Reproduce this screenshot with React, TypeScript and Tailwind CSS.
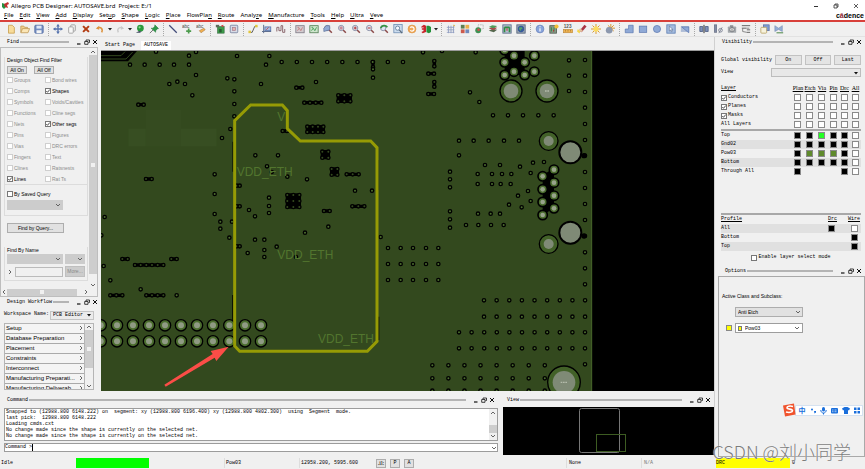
import React, { useState } from "react";

const SANS = "font-['Liberation_Sans',sans-serif]";
const MONO = "font-['Liberation_Mono',monospace]";
const SERIF = "font-['Liberation_Serif',serif]";

const MENUS = ["File", "Edit", "View", "Add", "Display", "Setup", "Shape", "Logic", "Place", "FlowPlan", "Route", "Analyze", "Manufacture", "Tools", "Help", "Ultra", "Veve"];
const ACCESS_KEY: Record<string, number> = { Setup: 3, FlowPlan: 7, Analyze: 5 };

const BLUE = "#8fa9d6";
const NAVY = "#5673ad";

const lens = (
  <>
    <path d="M7 7l3.6 3.6" stroke="#8c4a4a" strokeWidth="1.8" />
    <circle cx="5" cy="4.8" r="3.2" fill="#dfe6f2" stroke="#8b8fa6" strokeWidth="1.1" />
  </>
);

// Toolbar glyphs, all drawn on a 12 x 12 grid
const ICONS: Record<string, React.ReactNode> = {
  "New": <path d="M3 1.5h4.5L10 4v7H3z" fill="#f8dc9a" stroke="#c9a050" />,
  "Open": <><path d="M1 10V2.500h3.500l1 1.500H9v2" fill="#f2d08c" stroke="#c19a58" /><path d="M1 10.500L3 5.500h8.500L9.500 10.500z" fill="#fbe6b6" stroke="#c19a58" /></>,
  "Save": <><rect x="1" y="1.500" width="10" height="9.500" rx="1" fill="#7690c4" stroke="#4d67a0" /><rect x="3" y="2" width="6" height="3.500" fill="#dfe8f8" /><rect x="3" y="7.500" width="6" height="3.500" fill="#f4f4f4" /></>,
  "Move": <><path d="M6 1v10M1 6h10" stroke={NAVY} strokeWidth="1.6" /><path d="M6 0l2.200 3H3.800zM6 12l2.200-3H3.800zM0 6l3-2.200v4.400zM12 6L9 3.800v4.400z" fill={NAVY} /></>,
  "Copy": <><rect x="4.500" y="1" width="5.500" height="7.500" rx="1" fill="#eee" stroke="#9a9a9a" /><rect x="2" y="3.500" width="5.500" height="7.500" rx="1" fill="#f8f8f8" stroke="#9a9a9a" /></>,
  "Delete": <path d="M2.500 2.500l7 7M9.500 2.500l-7 7" stroke="#b23c12" strokeWidth="2.4" />,
  "Undo": <><path d="M3 5c4-2 7 1 5 5" fill="none" stroke="#dd9440" strokeWidth="1.8" /><path d="M1 5.500l4-3.500v5z" fill="#dd9440" /></>,
  "Redo": <><path d="M9 5C5 3 2 6 4 10" fill="none" stroke="#c9c9c9" strokeWidth="1.6" /><path d="M11 5.500L7 2v5z" fill="#c9c9c9" /></>,
  "Highlight": <><circle cx="6.500" cy="5" r="4" fill="#2b9a3c" /><circle cx="5.500" cy="4" r="1.300" fill="#8bdc92" /><path d="M1 10.500l4-2 3 .5-2 1.500z" fill="#404b60" /></>,
  "Pin": <><path d="M1 11l4-4" stroke="#777" strokeWidth="1.2" /><path d="M7 1l4.500 4.500-1.500.5-2 2v2L2.500 5h2.200L6.700 3z" fill="#2d9848" stroke="#1d6d33" strokeWidth=".5" /></>,
  "Add line": <path d="M1.500 1.500l9 9" stroke="#414b78" strokeWidth="1.400" />,
  "Add text": <><text x="0" y="5" fontSize="5.500" fill="#4b4b4b">abc</text><path d="M8 5.500v6M5 8.500h6" stroke="#4b9a4b" strokeWidth="2" /></>,
  "Edit text": <><text x="0" y="5" fontSize="5.500" fill="#4b4b4b">abc</text><path d="M4 8l5.500-3L11 7l-5 3.500z" fill="#f0b050" stroke="#a06a30" strokeWidth=".6" /></>,
  "Place component": <><rect x="3" y="3" width="8" height="8" fill="#3d9a4a" stroke="#285c30" strokeWidth=".6" /><rect x="1" y="1" width="4" height="3" fill="#5b6b5b" /><path d="M7 2l3-1v3z" fill="#d23a3a" /><rect x="5" y="6" width="3" height="4" fill="#285c30" /></>,
  "Chip": <><rect x="1.500" y="1.500" width="9" height="9" rx="1" fill="#d7dce6" stroke="#7781a0" /><rect x="4" y="4" width="4" height="4" fill="#e6b4ac" stroke="#98718a" strokeWidth=".7" /></>,
  "Add connect": <><path d="M2 10h3l3-7h3" fill="none" stroke="#555" strokeWidth="1.100" /><rect x="0.500" y="8" width="3" height="3" fill="#e2c63c" /><rect x="8.500" y="1" width="3" height="3" fill="#e2c63c" /></>,
  "Slide": <><path d="M2 1v10M0 9h11" stroke="#60708f" strokeWidth="1.200" /><rect x="3.500" y="3.500" width="7" height="4.500" fill="#a9bddf" stroke={NAVY} /><path d="M5 7l3-3" stroke="#c24848" /></>,
  "Delay tune": <path d="M1 9V4h2.500v4H6V2h2v8h2.500V6" fill="none" stroke="#8d6a70" strokeWidth="1.200" />,
  "Unrats all": <><rect x="1" y="2" width="10" height="8.500" fill="#d3ccd0" stroke="#807c88" /><path d="M3 8l2-3 2 3 2-4M3 4h2" stroke="#c27676" fill="none" /></>,
  "Rats all": <><rect x="1" y="2" width="10" height="8.500" fill="#cfe5cd" stroke="#548056" /><path d="M3 8l2-3 2 3 2-4M3 4h2" stroke="#36964a" fill="none" /></>,
  "Zoom window": <>{lens}<path d="M1 9V5l3-3h4v5z" fill="#91a9d3" stroke="#5c7099" strokeWidth=".8" /></>,
  "Zoom fit": <>{lens}<circle cx="5" cy="4.800" r="2" fill="#c88a98" /></>,
  "Zoom in": <>{lens}<path d="M5 3v3.600M3.200 4.800h3.600" stroke="#b03030" strokeWidth="1.200" /></>,
  "Zoom out": <>{lens}<path d="M3.200 4.800h3.600" stroke="#b03030" strokeWidth="1.200" /></>,
  "Zoom previous": <>{lens}<path d="M2 5c2-4 6-4 8-1" fill="none" stroke="#349342" strokeWidth="2" /></>,
  "Zoom selection": <><rect x="1" y="0.500" width="10" height="10" fill="#ccdcee" stroke="#7290b4" /><circle cx="5.500" cy="5" r="2.500" fill="#f5f9ff" stroke="#5a7898" /><path d="M7.500 7l3.500 4" stroke="#5a6878" strokeWidth="1.400" /></>,
  "Redraw": <><circle cx="6" cy="6" r="4.800" fill="#f0a95a" stroke="#d98a34" strokeWidth=".6" /><path d="M4 7.500a2.500 2.500 0 1 0 0-3" fill="none" stroke="#fff" strokeWidth="1.400" /></>,
  "3D viewer": <><path d="M0.500 3l3-2 2.500 1v7.500L2 11 .5 9.500l2.500-1V7H1V5h2V4l-2.500.5z" fill="#c9242b" /><path d="M6.500 2h3L12 3.500v6L9.500 11l-3-1z" fill="#24903a" /></>,
  "Grid": <><path d="M3 2v9M6 2v9M9 2v9M1 4h9M1 7h9M1 10h9" stroke="#8f9dc0" strokeWidth="1" /><path d="M9 1l1.500 1.500" stroke="#e0b04a" strokeWidth="1.500" /></>,
  "Colors": <><rect x="1" y="1" width="4.500" height="4.500" fill="#5d7f52" /><rect x="6.500" y="1" width="4.500" height="4.500" fill="#eab04a" /><rect x="1" y="6.500" width="4.500" height="4.500" fill="#cc5a4c" /><rect x="6.500" y="6.500" width="4.500" height="4.500" fill="#7088ba" /></>,
  "Shadow": <><rect x="5" y="1" width="6" height="5" fill="#f3f3f3" stroke="#999" strokeDasharray="1 1" /><circle cx="5" cy="7.500" r="3.500" fill="#3f9153" /><circle cx="5.500" cy="7" r="1.500" fill="#d94a4a" /></>,
  "Layers": <><path d="M1 8l4-2 6 1-4 3z" fill="#54684e" /><path d="M1 5.500l4-2 6 1-4 3z" fill="#a94a4a" /><path d="M1 3.500l4-2 6 1-4 2.500z" fill="#4d9a58" /></>,
  "Cross section": <><rect x="1" y="1" width="10" height="10" fill="#b3bdce" stroke="#5f6f8d" /><path d="M3 4h6M3 4v6M9 4v6" stroke="#2f8b44" strokeWidth="2" /><path d="M6 5v3" stroke="#b73838" strokeWidth="1.300" /></>,
  "World view": <><rect x="1" y="1" width="10" height="10" fill="#9aa6b6" stroke="#59677e" /><circle cx="6" cy="6" r="3.800" fill="#36599a" /><path d="M3.500 4.500l3-1 1.500 2-2 1v2l-2-1.500z" fill="#50a36a" /></>,
  "Show element": <><circle cx="6" cy="6" r="4.700" fill="#88a4dc" stroke="#6981b6" strokeWidth=".8" /><path d="M6 5v4M6 2.800v1.200" stroke="#fff" strokeWidth="1.400" /></>,
  "Constraints": <><rect x="1" y="2" width="8" height="9" fill="#899789" stroke="#515f51" /><path d="M3 4v5M6 4v5" stroke="#38904a" strokeWidth="1.200" /><circle cx="9" cy="3" r="2.500" fill="#f2bf38" /><path d="M5.500 7v2" stroke="#c22" /></>,
  "Measure": <><text x="1" y="5" fontSize="5.500" fontWeight="bold" fill="#555">123</text><rect x="0.500" y="6.500" width="11" height="4" fill="#eeb454" stroke="#b98232" strokeWidth=".7" /><path d="M3 7v2M6 7v2M9 7v2" stroke="#9d6b20" strokeWidth=".7" /></>,
  "Assign color": <><path d="M3 8l6-7 2.500 2-6 7z" fill="#a93545" /><path d="M1 6l3 3-1 2.500L0 9z" fill="#f4d64c" /><path d="M4 5l3 3-2 2-3-3z" fill="#e3c3a0" /></>,
  "Highlight on": <><path d="M6 0v12M0 6h12M1.800 1.800l8.400 8.400M10.200 1.800l-8.400 8.400" stroke="#d99a36" strokeWidth="1.200" /><circle cx="6" cy="6" r="3.200" fill="#fbdc60" /></>,
  "Highlight off": <><path d="M7 0v9M3 5h9M3.500 1.500l7 7M10.500 1.500l-7 7" stroke="#d99a36" strokeWidth="1.200" /><circle cx="5" cy="7.500" r="4" fill="#8c98ae" /></>,
  "Shape polygon": <path d="M5.500 1.500H11v9H1.500V6h4z" fill={BLUE} stroke={NAVY} strokeWidth=".8" />,
  "Shape rectangle": <rect x="1.500" y="2.500" width="9" height="7.500" fill={BLUE} stroke={NAVY} strokeWidth=".8" />,
  "Shape circle": <circle cx="6" cy="6" r="4.300" fill={BLUE} stroke={NAVY} strokeWidth=".8" />,
  "Shape select": <><rect x="1" y="1" width="10" height="10" fill="#a5bcdf" stroke="#5f7fb3" /><path d="M4 2.500v6l1.500-1.200 1 2 1-.6-1-1.900h2z" fill="#eef4ff" stroke="#495b7c" strokeWidth=".6" /></>,
  "Shape void": <><rect x="1" y="2.500" width="10" height="7" fill="#aebcd6" /><path d="M2 3.500h8.500v7z" fill={BLUE} stroke={NAVY} strokeWidth=".8" /></>,
  "Split": <><path d="M1 3h3.500v6H1zM7.500 3H11v6H7.500z" fill="#7d8fb7" stroke="#4f5f86" /><path d="M6 1v10" stroke="#333" strokeWidth="1.200" /></>,
  "Align": <><rect x="1.500" y="1" width="3" height="9" fill="#828da6" stroke="#525a70" strokeWidth=".6" /><circle cx="9" cy="7.500" r="2.200" fill="none" stroke="#737b8e" /><path d="M7 11L11 4" stroke="#737b8e" /></>,
  "Snapshot": <><rect x="1" y="3" width="10" height="7.500" rx="1" fill="#a4a8ac" /><rect x="3.500" y="1.500" width="4" height="2" fill="#878b90" /><circle cx="6" cy="6.700" r="2.700" fill="#f0f0f0" stroke="#6e7176" /><path d="M6 5v3.500" stroke="#666" /></>,
  "Net logic": <><path d="M1 2h10M1 5h5M7 7h4M7 10h4" stroke="#666" strokeWidth="1.200" /><path d="M2 5v4l5 1M6 5h4" fill="none" stroke="#777" /></>,
  "Reports": <><rect x="4" y="1" width="7" height="7" fill="#7f9cd3" stroke="#55699b" strokeWidth=".8" /><rect x="1" y="4" width="7" height="7" rx="1" fill="#f6f2dd" stroke="#b49c58" strokeWidth=".9" /></>,
  "Waive": <><path d="M1 2l4.500 3L10 2v7L5.500 6.500 1 9z" fill="#93add6" stroke="#6f84aa" strokeWidth=".6" /><path d="M3 10.500h8" stroke="#75a070" strokeWidth="1.600" /></>,
};

const TOOLBAR: string[][] = [
  ["New", "Open", "Save"],
  ["Move", "Copy", "Delete", "Undo", "v", "Redo", "v", "Highlight", "Pin"],
  ["Add line", "Add text", "Edit text"],
  ["Place component", "Chip"],
  ["Add connect", "Slide", "Delay tune"],
  ["Unrats all", "Rats all", "Zoom window", "Zoom fit", "Zoom in", "Zoom out", "Zoom previous", "Zoom selection", "Redraw", "3D viewer", "v"],
  ["Grid", "Colors", "Shadow", "Layers", "Cross section", "World view"],
  ["Show element", "Constraints", "Measure", "Assign color", "Highlight on", "Highlight off"],
  ["Shape polygon", "Shape rectangle", "Shape circle", "Shape select", "Shape void"],
  ["Split", "Align", "Snapshot", "Net logic"],
  ["Reports", "Waive"],
];

function Toolbar() {
  return (
    <div className={`flex h-[15px] shrink-0 items-center border-b border-[#e2e2e2] bg-[#f0f0f0] pl-1 ${SANS}`}>
      {TOOLBAR.map((group, gi) => (
        <React.Fragment key={gi}>
          {gi > 0 && <span className="mx-0.5 h-[13px] w-px border-l border-dotted border-[#a8a8a8]" />}
          {group.map((name, i) =>
            name === "v" ? (
              <button key={i} aria-label="More" className="flex w-[6px] justify-center">
                <svg width="4" height="3" viewBox="0 0 4 3"><path d="M0 0h4L2 2.500z" fill="#222" /></svg>
              </button>
            ) : (
              <button key={i} aria-label={name} className="flex w-[14px] justify-center">
                <svg width="10" height="10" viewBox="0 0 12 12">{ICONS[name]}</svg>
              </button>
            )
          )}
        </React.Fragment>
      ))}
    </div>
  );
}

function Chevron({ dir = "down", solid = false }: { dir?: string; solid?: boolean }) {
  const d: Record<string, string> = {
    down: "M1 2l2 2 2-2",
    up: "M1 4l2-2 2 2",
    right: "M2 1l2 2-2 2",
    left: "M4 1L2 3l2 2",
  };
  return (
    <svg width="6" height="6" viewBox="0 0 6 6" className="shrink-0">
      <path d={solid ? "M1 2h4L3 4.500z" : d[dir]} fill={solid ? "#111" : "none"} stroke={solid ? "none" : "#555"} strokeWidth="0.9" />
    </svg>
  );
}

function PanelHeader({ title, className = "" }: { title: string; className?: string }) {
  return (
    <div className={`flex h-[10px] shrink-0 items-center pl-[7px] pr-[2px] ${MONO} text-[5px] leading-[10px] text-black ${className}`}>
      <span>{title}</span>
      <span className="ml-px mr-[6px] h-[2px] flex-1 bg-[#b4b4b4]" />
      <button aria-label={`Minimize ${title}`} className="flex w-2 justify-center">
        <svg width="6" height="6" viewBox="0 0 6 6"><path d="M1 5h3.500" stroke="#111" strokeWidth="1.200" /></svg>
      </button>
      <button aria-label={`Float ${title}`} className="flex w-2 justify-center">
        <svg width="6" height="6" viewBox="0 0 6 6" fill="none" stroke="#111" strokeWidth="0.8"><path d="M2 2V1h3.500v2.500h-1" /><path d="M0.700 2.500h3.300v2.800H.7z" /></svg>
      </button>
      <button aria-label={`Close ${title}`} className="flex w-2 justify-center">
        <svg width="6" height="6" viewBox="0 0 6 6"><path d="M1 1l4 4M5 1L1 5" stroke="#111" strokeWidth="1" /></svg>
      </button>
    </div>
  );
}

function Tick({ checked = false, disabled = false, label }: { checked?: boolean; disabled?: boolean; label: string }) {
  const [on, setOn] = useState(checked);
  return (
    <label className={`flex items-center gap-px ${disabled ? "text-[#8c8c8c]" : ""}`}>
      <span className="relative flex">
        <input
          type="checkbox"
          checked={on}
          disabled={disabled}
          onChange={() => setOn(!on)}
          className="size-[6px] appearance-none border border-[#777] bg-white disabled:border-[#cfcfcf]"
        />
        {on && (
          <svg width="6" height="6" viewBox="0 0 6 6" className="pointer-events-none absolute inset-0">
            <path d="M1.300 3l1.200 1.300 2.300-2.800" fill="none" stroke="#222" strokeWidth="0.8" />
          </svg>
        )}
      </span>
      <span>{label}</span>
    </label>
  );
}

function Picker({ label, value = "", disabled = false, solid = false, className = "" }: { label: string; value?: string; disabled?: boolean; solid?: boolean; className?: string }) {
  return (
    <span className={`relative flex items-center border ${className}`}>
      <select aria-label={label} disabled={disabled} defaultValue={value} className="h-full w-full appearance-none bg-transparent pl-[2px] pr-2 opacity-100">
        <option>{value}</option>
      </select>
      <span className="pointer-events-none absolute right-px"><Chevron solid={solid} /></span>
    </span>
  );
}

const FIND_ROWS: [string, string][] = [
  ["Groups", "Bond wires"], ["Comps", "Shapes"], ["Symbols", "Voids/Cavities"], ["Functions", "Cline segs"], ["Nets", "Other segs"],
  ["Pins", "Figures"], ["Vias", "DRC errors"], ["Fingers", "Text"], ["Clines", "Ratsnests"], ["Lines", "Rat Ts"],
];
const FIND_ON = ["Shapes", "Other segs", "Lines"];

function FindPanel() {
  const btn = "border border-[#adadad] bg-[#e1e1e1] text-center";
  const off = "border-[#cccccc] bg-[#cccccc]";
  return (
    <section>
      <PanelHeader title="Find" />
      <div className={`mr-[3px] flex h-[250px] flex-col border border-[#bdbdbd] bg-[#f0f0f0] ${SANS} text-[5px] leading-[6px]`}>
        <div className="flex flex-1">
          <div className="flex-1 pl-[3px] pr-px pt-[9px]">
            <div className="border-x border-b border-[#dcdcdc] px-[2px]">
              <h3>Design Object Find Filter</h3>
              <div className="mt-[3px] flex gap-[7px]">
                <button className={`h-[8px] w-[20px] leading-none ${btn}`}>All On</button>
                <button className={`h-[8px] w-[20px] leading-none ${btn}`}>All Off</button>
              </div>
              <div className="grid grid-cols-[38px_1fr]">
                {FIND_ROWS.flat().map((name) => (
                  <div key={name} className="flex h-[11px] items-center whitespace-nowrap">
                    <Tick label={name} checked={FIND_ON.includes(name)} disabled={!FIND_ON.includes(name)} />
                  </div>
                ))}
              </div>
            </div>
            <div className="border-x border-b border-[#dcdcdc] px-[2px] pb-[5px] pt-[6px]">
              <Tick label="By Saved Query" />
              <Picker label="Saved query" disabled className={`mt-[3px] h-[10px] w-[56px] ${off}`} />
            </div>
            <button className={`ml-[3px] mt-[7px] h-[10px] w-[57px] leading-none ${btn}`}>Find by Query...</button>
            <div className="mt-[14px] border-x border-b border-[#dcdcdc] px-[2px] pb-[3px]">
              <h3>Find By Name</h3>
              <div className="mt-px flex gap-[2px]">
                <Picker label="Name type" disabled className={`h-[10px] w-[56px] ${off}`} />
                <Picker label="Name mode" disabled className={`h-[10px] flex-1 ${off}`} />
              </div>
              <div className="mt-[2px] flex items-center gap-[2px]">
                <Chevron dir="right" />
                <input aria-label="Name" className="h-[10px] w-[48px] border border-[#bbb] bg-[#f0f0f0]" />
                <button disabled className="h-[11px] flex-1 border border-[#bfbfbf] bg-[#cccccc] leading-none text-[#888]">More...</button>
              </div>
            </div>
          </div>
          <div className="flex w-[8px] flex-col items-center bg-[#f0f0f0] pt-px">
            <Chevron dir="up" />
            <div className="flex w-full flex-1 items-center justify-center bg-[#cdcdcd]"><span className="size-1 bg-[#f0f0f0]" /></div>
            <div className="flex h-[14px] items-end"><Chevron /></div>
          </div>
        </div>
        <div className="flex h-[8px] items-center pr-[8px]">
          <Chevron dir="left" />
          <div className="mr-[6px] flex h-[7px] flex-1 items-center justify-center bg-[#cdcdcd]"><span className="size-1 bg-[#f0f0f0]" /></div>
          <Chevron dir="right" />
        </div>
      </div>
    </section>
  );
}

const WORKFLOW = ["Setup", "Database Preparation", "Placement", "Constraints", "Interconnect", "Manufacturing Preparati...", "Manufacturing Deliverab..."];

function WorkflowPanel() {
  return (
    <section className="flex min-h-0 flex-1 flex-col pb-px">
      <PanelHeader title="Design Workflow" />
      <div className={`flex h-4 shrink-0 items-center justify-between pl-1 pr-[7px] ${MONO} text-[5px]`}>
        <span>Workspace Name:</span>
        <Picker label="Workspace Name" value="PCB Editor" solid className="h-[9px] w-[44px] border-[#c4c4c4] bg-[#ebebeb]" />
      </div>
      <div className="ml-1 mr-[7px] flex min-h-0 flex-1 border border-[#b5b5b5]">
        <ul className={`min-w-0 flex-1 overflow-hidden border-r border-[#b5b5b5] ${SANS} text-[6px] leading-[8px]`}>
          {WORKFLOW.map((step) => (
            <li key={step} className="h-[10px] border-b border-[#aaaaaa] bg-[#f4f4f4]">
              <button className="flex w-full items-center justify-between whitespace-nowrap pl-px text-left">
                <span>{step}</span>
                <Chevron dir="right" />
              </button>
            </li>
          ))}
        </ul>
        <div className="flex w-[8px] flex-col items-center">
          <Chevron dir="up" />
          <div className="flex h-[38px] w-full items-center justify-center bg-[#cdcdcd]"><span className="size-1 bg-[#f0f0f0]" /></div>
          <div className="flex flex-1 items-end"><Chevron /></div>
        </div>
      </div>
    </section>
  );
}

// Board geometry. One unit is a third of a pixel.
type Pt = [number, number];

const row = (y: number, xs: number[]): Pt[] => xs.map((x) => [x, y] as Pt);
const col = (x: number, ys: number[]): Pt[] => ys.map((y) => [x, y] as Pt);
const fill = (from: number, step: number, n: number) => Array.from({ length: n }, (_, i) => from + step * i);

const VIAS: Pt[] = [
  ...row(44, [90, 134, 179, 222, 267, 498]),
  ...row(36, fill(545, 45.5, 9)),
  [267, 17], [288, 6], [411, 18], [508, 18], [168, 5], [288, 75], [208, 102], [232, 95], [255, 102], [277, 136],
  [382, 85], ...col(403, [88, 124, 162, 199]), [391, 237], [366, 264], [483, 102], [648, 96], [819, 58], [819, 83],
  ...col(344, [373, 432, 492]), [361, 515], [361, 536], [388, 563], [396, 515],
  [14, 501], [4, 556], [11, 648], [31, 691], [122, 718], [230, 736],
  [466, 316], [534, 316], [501, 349], [515, 366], [562, 380], [621, 388], [765, 422], [507, 443], [447, 480], [465, 499],
  [685, 530], [615, 548], [465, 569], [493, 569], [530, 590], [493, 600], [493, 621], [443, 609], [588, 621], [842, 561],
  [507, 468], [507, 489], [816, 422],
  ...[594, 642, 690].flatMap((y) => row(y, [864, 902, 939, 978, 1015])),
  [969, 7], [1026, 3], [1127, 7], [1110, 127], [1138, 156],
  ...col(1407, [31, 77, 123]),
  ...col(1455, [30, 77, 126, 173, 222, 270, 317, 366, 414, 462, 510, 558, 607, 655, 703, 943]),
  ...row(196, [1179, 1224, 1269, 1315, 1361]),
  ...row(272, [1077, 1121, 1166, 1212, 1257]), [1077, 316],
  [1155, 345], [1200, 345], [1260, 350], [1299, 338], [1332, 336], [1292, 369],
  ...row(372, [1133, 1176, 1206, 1234]), ...row(402, [1133, 1176, 1202, 1232]),
  ...col(1050, [365, 388, 412, 484, 508, 533]),
  [1284, 423], [1254, 437], [1292, 453], [1227, 464], [1265, 472],
  ...row(491, [1134, 1172, 1200]), ...row(525, [1098, 1135, 1173, 1211]),
  ...row(751, fill(1152, 37.9, 9)), ...row(800, fill(1152, 37.9, 9)),
  ...row(847, fill(1077, 37.8, 11)), ...row(895, fill(1077, 37.8, 11)),
  ...row(946, fill(997, 48.2, 8)), ...row(985, fill(997, 48.2, 8)), ...row(1022, fill(997, 48.2, 8)),
];

// Vias set close together on a solid void
const CLUSTERS: { x: number; y: number; cols: number; rows: number; gap: number }[] = [
  { x: 715, y: 136, cols: 3, rows: 2, gap: 18 },
  { x: 622, y: 230, cols: 4, rows: 2, gap: 16 },
  { x: 667, y: 305, cols: 2, rows: 2, gap: 18 },
  { x: 695, y: 357, cols: 2, rows: 2, gap: 17 },
  { x: 562, y: 435, cols: 3, rows: 3, gap: 18 },
  { x: 115, y: 164, cols: 2, rows: 1, gap: 16 },
  { x: 138, y: 387, cols: 2, rows: 1, gap: 17 },
  { x: 589, y: 113, cols: 2, rows: 1, gap: 18 },
  { x: 613, y: 158, cols: 4, rows: 1, gap: 17 },
  { x: 548, y: 243, cols: 2, rows: 1, gap: 13 },
  { x: 740, y: 373, cols: 3, rows: 1, gap: 18 },
  { x: 757, y: 469, cols: 3, rows: 1, gap: 18 },
  { x: 672, y: 483, cols: 2, rows: 1, gap: 17 },
  { x: 67, y: 627, cols: 2, rows: 1, gap: 16 },
  { x: 214, y: 627, cols: 2, rows: 1, gap: 16 },
  { x: 105, y: 645, cols: 6, rows: 1, gap: 17 },
  { x: 31, y: 736, cols: 3, rows: 1, gap: 18 },
  { x: 139, y: 736, cols: 4, rows: 1, gap: 17 },
  { x: 410, y: 407, cols: 2, rows: 1, gap: 9 },
  { x: 410, y: 469, cols: 2, rows: 1, gap: 9 },
  { x: 410, y: 589, cols: 2, rows: 1, gap: 9 },
  { x: 819, y: 36, cols: 1, rows: 2, gap: 16 },
  { x: 1003, y: 33, cols: 1, rows: 2, gap: 16 },
  { x: 985, y: 71, cols: 2, rows: 1, gap: 17 },
  { x: 1003, y: 96, cols: 1, rows: 2, gap: 14 },
  { x: 985, y: 132, cols: 2, rows: 1, gap: 17 },
];

const HEADER_X = [2, 51, 99, 147, 195, 243, 291, 339, 388, 435, 483];
const USB_PADS: Pt[] = [[1362, 359], [1328, 379], [1362, 398], [1328, 418], [1362, 437], [1328, 456], [1362, 475], [1328, 495]];
const TOP_PADS: Pt[] = [[1214, 0], [1242, 17], [1214, 37], [1274, 37], [1303, 17], [1242, 65], [1303, 65], [1214, 75], [1274, 75]];
// x, y, outer ring, drill
const MOUNTS: [number, number, number, number][] = [
  [1233, 123, 33, 22], [1341, 123, 33, 22], [1346, 273, 28, 15], [1346, 582, 28, 15], [1392, 997, 49, 34],
];
const DRILLS: Pt[] = [[1411, 307], [1411, 548]];

function Board() {
  const copper = "#33491e";
  const ring = "#4b6d2e";
  const drill = "#7f8a76";
  return (
    <svg viewBox="3 3 1839 1020" preserveAspectRatio="xMinYMin slice" className="block h-full w-full bg-black" role="img" aria-label="Board layout, layer Pow03">
      <rect x="0" y="0" width="1474" height="1024" fill={copper} />
      <path d="M1475 0v1024" stroke={ring} strokeWidth="3" />
      <rect x="85" y="236" width="265" height="53" fill="#374e22" />
      <rect x="137" y="180" width="106" height="109" fill="#354b20" />
      <path d="M3 3h108L84 34H3z" fill="#000" />
      <path d="M3 27h75l20-21M3 17h60l12-12" stroke={ring} strokeWidth="2" fill="none" />
      <path d="M399 275v90M398 735v85M833 330v90M836 800v70" stroke="#0c1206" strokeWidth="4" />

      {CLUSTERS.map((c, i) => (
        <g key={i}>
          <rect x={c.x - 5} y={c.y - 5} width={(c.cols - 1) * c.gap + 10} height={(c.rows - 1) * c.gap + 10} rx="3" fill="#000" />
          {Array.from({ length: c.cols * c.rows }, (_, n) => (
            <circle key={n} cx={c.x + (n % c.cols) * c.gap} cy={c.y + Math.floor(n / c.cols) * c.gap} r="5" fill={copper} stroke="#000" strokeWidth="4" />
          ))}
        </g>
      ))}

      {VIAS.map(([x, y], i) => (
        <circle key={i} cx={x} cy={y} r="5" fill={ring} stroke="#000" strokeWidth="4" />
      ))}

      <path d="M1214 0h60v75h-60zM1328 375l34-20v120l-34 20z" fill="#000" />
      {[...TOP_PADS, ...USB_PADS].map(([x, y], i) => (
        <g key={i}>
          <circle cx={x} cy={y} r="14" fill={ring} stroke="#000" strokeWidth="5" />
          <circle cx={x} cy={y} r="7" fill="#98a38c" />
        </g>
      ))}

      {[826, 874].map((y) =>
        HEADER_X.map((x) => (
          <g key={`${x}-${y}`}>
            <circle cx={x} cy={y} r="17" fill={ring} stroke="#000" strokeWidth="4" />
            <circle cx={x} cy={y} r="9" fill="#8f9a84" />
          </g>
        ))
      )}

      {MOUNTS.map(([x, y, outer, inner]) => (
        <g key={`${x}-${y}`}>
          <circle cx={x} cy={y} r={outer} fill="#426128" stroke="#000" strokeWidth="4" />
          <circle cx={x} cy={y} r={inner} fill={drill} />
        </g>
      ))}
      <path d="M1335 123h12M1382 997h20" stroke="#b4bbab" strokeWidth="4" strokeDasharray="5 2" />
      {DRILLS.map(([x, y]) => (
        <g key={y}>
          <circle cx={x + 41} cy={y + 10} r="8" fill="#000" />
          <circle cx={x} cy={y} r="33" fill={drill} stroke="#000" strokeWidth="6" />
        </g>
      ))}

      <g className={SANS} fontSize="36" fill="#52752e">
        <text x="532" y="213">V</text>
        <text x="410" y="377">VDD_ETH</text>
        <text x="532" y="627">VDD_ETH</text>
        <text x="654" y="878">VDD_ETH</text>
      </g>
      <path d="M404 212L452 165H547L562 182V236L601 273H812L831 293V874L802 904H419L404 888Z" fill="none" stroke="#969b05" strokeWidth="9" />
      <path d="M193 1004L338 912L332 903L386 890L349 933L344 923L197 1010Z" fill="#fb4d47" />
    </svg>
  );
}

const COLUMNS = ["Plan", "Etch", "Via", "Pin", "Drc", "All"];
const K = "bg-black";
const G = "bg-[#5f8a2c]";
const W = "bg-white";
const LAYERS: { name: string; cells: (string | null)[] }[] = [
  { name: "Top", cells: [K, K, "bg-[#22ff22]", K, K, W] },
  { name: "Gnd02", cells: [K, K, K, K, K, W] },
  { name: "Pow03", cells: [K, G, G, G, K, W] },
  { name: "Bottom", cells: [K, K, K, K, K, W] },
  { name: "Through All", cells: [K, null, null, null, K, W] },
];
const PROFILES: { name: string; drc: string | null; wire: string }[] = [
  { name: "All", drc: K, wire: W },
  { name: "Bottom", drc: null, wire: K },
  { name: "Top", drc: null, wire: K },
];

function Swatch({ color, label }: { color: string; label: string }) {
  return <input type="checkbox" aria-label={label} className={`block size-[7px] appearance-none border border-[#8a8a8a] ${color}`} />;
}

function VisibilityPanel() {
  const btn = "h-[10px] flex-1 border border-[#c2c2c2] bg-[#e4e4e4] leading-none";
  return (
    <section className={`${MONO} text-[5px] leading-[9px]`}>
      <PanelHeader title="Visibility" />
      <div className="pl-[6px] pr-1">
        <div className="mt-2 flex h-[10px] items-center gap-[3px]">
          <span className="whitespace-nowrap">Global visibility</span>
          <button className={btn}>On</button>
          <button className={btn}>Off</button>
          <button className={btn}>Last</button>
        </div>
        <div className="mt-[3px] flex h-[9px] items-center">
          <span className="w-[50px] shrink-0">View</span>
          <Picker label="View" solid className="h-[9px] flex-1 border-[#bdbdbd] bg-[#e8e8e8]" />
        </div>

        <table className="mt-[7px] w-full table-fixed border-collapse">
          <colgroup>
            <col />
            <col className="w-3" /><col className="w-3" /><col className="w-3" />
            <col className="w-[11px]" /><col className="w-[11px]" /><col className="w-[11px]" />
          </colgroup>
          <thead>
            <tr className="h-[9px]">
              <th className="p-0 text-left font-normal underline">Layer</th>
              {COLUMNS.map((c) => <th key={c} className={`p-0 text-center ${SERIF} text-[6px] font-normal underline`}>{c}</th>)}
            </tr>
          </thead>
          <tbody className="border-b-2 border-[#a8a8a8]">
            {["Conductors", "Planes", "Masks", "All Layers"].map((name) => (
              <tr key={name} className="h-[9px]">
                <td className="p-0">{name === "All Layers" ? name : <Tick label={name} checked />}</td>
                {COLUMNS.map((c) => <td key={c} className="p-0 pl-[2px]"><Swatch color={W} label={`${name} ${c}`} /></td>)}
              </tr>
            ))}
          </tbody>
          <tbody>
            {LAYERS.map((layer) => (
              <tr key={layer.name} className="h-[9px] even:bg-[#e0e0e0]">
                <td className="p-0">{layer.name}</td>
                {layer.cells.map((color, i) => (
                  <td key={i} className="p-0 pl-[2px]">{color && <Swatch color={color} label={`${layer.name} ${COLUMNS[i]}`} />}</td>
                ))}
              </tr>
            ))}
          </tbody>
        </table>

        <table className="mt-[37px] w-full table-fixed border-collapse border-t-2 border-[#a8a8a8]">
          <colgroup><col /><col className="w-[20px]" /><col className="w-[13px]" /></colgroup>
          <thead>
            <tr className="h-[9px]">
              <th className="p-0 text-left font-normal underline">Profile</th>
              <th className="p-0 text-left font-normal underline">Drc</th>
              <th className="p-0 text-left font-normal underline">Wire</th>
            </tr>
          </thead>
          <tbody>
            {PROFILES.map((p) => (
              <tr key={p.name} className="h-[9px] odd:bg-[#e0e0e0]">
                <td className="p-0">{p.name}</td>
                <td className="p-0">{p.drc && <Swatch color={p.drc} label={`${p.name} Drc`} />}</td>
                <td className="p-0 pl-[3px]"><Swatch color={p.wire} label={`${p.name} Wire`} /></td>
              </tr>
            ))}
          </tbody>
        </table>
        <div className="mt-[2px] flex h-[9px] items-center justify-center"><Tick label="Enable layer select mode" /></div>
      </div>
    </section>
  );
}

function ImeBar() {
  return (
    <div className="absolute bottom-[39px] right-px flex items-center">
      <svg width="14" height="14" viewBox="0 0 14 14" className="relative z-10">
        <path d="M1 2.500L12 .5l1.500 11L3 13.500z" fill="#f0532d" />
        <path d="M11 3.500c-3-1-6-.3-6 1.200 0 2 5.500.8 5.500 3 0 1.700-3.500 2.200-6.500 1.300" fill="none" stroke="#fff" strokeWidth="1.600" />
      </svg>
      <div className="-ml-px flex h-[11px] items-center border border-[#d6e2f0] bg-white font-['Noto_Sans_CJK_SC',sans-serif] text-[7px] font-bold leading-none text-[#1a6fdc]">
        <span className="w-[12px] text-center">中</span>
        <svg width="54" height="9" viewBox="0 0 54 9" fill="#1a6fdc">
          <circle cx="4" cy="3.500" r="1" /><path d="M6 5h2v1.500L6.500 7.500z" />
          <rect x="14" y="1" width="3" height="4.500" rx="1.500" /><path d="M12.800 4c0 4 5.400 4 5.400 0M15.500 7v1.500" fill="none" stroke="#1a6fdc" />
          <rect x="23" y="2" width="7" height="5.500" rx="1" /><path d="M24 4h5M24 5.700h5" stroke="#fff" strokeWidth=".6" strokeDasharray="1 .5" />
          <path d="M34 2.500L36.500 1h3L42 2.500 41 4.500l-1-.5v4h-4V4l-1 .5z" />
          <rect x="46" y="1.500" width="2.500" height="2.500" /><rect x="49.500" y="1.500" width="2.500" height="2.500" /><rect x="46" y="5" width="2.500" height="2.500" /><rect x="49.500" y="5" width="2.500" height="2.500" />
        </svg>
      </div>
    </div>
  );
}

function OptionsPanel() {
  return (
    <section className="flex min-h-0 flex-1 flex-col pt-1">
      <PanelHeader title="Options" className="ml-[3px]" />
      <div className={`relative ml-[3px] flex-1 border border-[#a9a9a9] pl-[3px] pt-4 ${SANS} text-[5px] leading-[6px]`}>
        <p>Active Class and Subclass:</p>
        <Picker label="Class" value="Anti Etch" className="ml-[13px] mt-[8px] h-[10px] w-[68px] border-[#adadad] bg-[#e1e1e1]" />
        <div className="mt-[6px] flex items-center gap-[3px] pl-1">
          <span className="size-[6px] border border-[#888] bg-[#ffff00]" />
          <span className="flex h-[10px] w-[68px] items-center border border-[#9d9d9d] bg-white pl-[2px]">
            <span className="h-[5px] w-1 border border-[#777] bg-[#ffff00]" />
            <Picker label="Subclass" value="Pow03" className="h-[8px] flex-1 border-transparent" />
          </span>
        </div>
        <ImeBar />
      </div>
    </section>
  );
}

const LOG = [
  "Snapped to (12988.800 6148.222) on  segment: xy (12988.800 6196.400) xy (12988.800 4802.300)  using  Segment  mode.",
  "last pick:  12988.800 6148.222",
  "Loading cmds.cxt",
  "No change made since the shape is currently on the selected net.",
  "No change made since the shape is currently on the selected net.",
];

function CommandPanel() {
  return (
    <section className={`mr-[2px] min-w-0 flex-1 ${MONO} text-[5px]`}>
      <PanelHeader title="Command" />
      <div className="ml-1 mt-[3px] flex h-[33px] border border-[#9c9c9c] bg-white">
        <div className="flex min-w-0 flex-1 flex-col justify-end overflow-hidden whitespace-pre pb-px pl-px leading-[6px]">
          {LOG.map((line, i) => <div key={i}>{line}</div>)}
        </div>
        <div className="flex w-[8px] flex-col items-center bg-[#f0f0f0] py-px">
          <Chevron dir="up" />
          <span className="mt-auto h-[8px] w-full bg-[#cdcdcd]" />
          <Chevron />
        </div>
      </div>
      <div className="ml-1 mt-[2px] flex h-[9px] items-center border border-[#9c9c9c] bg-white">
        <label htmlFor="cmd" className="leading-none">Command &gt;</label>
        <input id="cmd" className="h-full min-w-0 flex-1 border-l border-black pl-px outline-none" />
        <Chevron />
      </div>
    </section>
  );
}

function ViewPanel() {
  return (
    <section className="flex w-[214px] shrink-0 flex-col">
      <PanelHeader title="View" />
      <svg viewBox="0 0 211 48" preserveAspectRatio="xMidYMid meet" className="ml-[3px] mt-[2px] h-[48px] bg-black" role="img" aria-label="World view">
        <rect x="76.500" y="1.500" width="40" height="44" rx="2" fill="none" stroke="#777" />
        <rect x="93.500" y="27.500" width="29" height="17" fill="none" stroke="#3d5c22" />
      </svg>
    </section>
  );
}

function StatusBar() {
  const btn = "h-[9px] w-[10px] border border-[#adadad] bg-[#e1e1e1] text-center leading-none";
  return (
    <footer className={`flex h-3 shrink-0 items-center bg-[#f0f0f0] pl-px ${MONO} text-[5px] leading-[10px]`}>
      <span className="w-[75px]">Idle</span>
      <span className="h-[10px] w-[73px] bg-[#00ff00]" />
      <span className="ml-[75px] w-[75px] border-l border-[#dddddd] pl-px">Pow03</span>
      <span className="w-[76px] border-l border-[#dddddd] pl-px">12958.200, 5995.600</span>
      <div className="flex flex-1 gap-1 pl-px">
        <button className={`${btn} ${SERIF} text-[6px]`}>.il:</button>
        <button className={btn}>P</button>
        <button className={btn}>A</button>
      </div>
      <span className="w-[75px] border-l border-[#dddddd] pl-[2px]">None</span>
      <span className="w-[75px] border-l border-[#dddddd] pl-[2px] text-[#777]">N/A</span>
      <span className="h-[10px] w-[74px] bg-[#ffff00]">DRC</span>
      <span className="w-[75px] pl-[2px]">0</span>
    </footer>
  );
}

export default function App() {
  return (
    <div className="relative flex h-screen flex-col overflow-hidden bg-[#f0f0f0] text-black">
      <header className="shrink-0 border-b-2 border-[#d8403a] bg-white font-['Noto_Sans',sans-serif] text-[6px] leading-[10px]">
        <div className="flex h-[11px] items-center pl-[2px] pr-[6px]">
          <svg width="7" height="7" viewBox="0 0 7 7" className="mr-[2px]">
            <path d="M0 1l3 1 1 3-2 2-2-2z" fill="#249142" /><path d="M2 2l4-2 1 2-2 1 1 3-3-1z" fill="#c22f2f" />
          </svg>
          <h1 className="flex-1 whitespace-pre">Allegro PCB Designer: AUTOSAVE.brd  Project: E:/1</h1>
          <div className="flex gap-[14px]">
            <button aria-label="Minimize"><svg width="6" height="6" viewBox="0 0 6 6"><path d="M1 3.500h4" stroke="#333" /></svg></button>
            <button aria-label="Restore"><svg width="6" height="6" viewBox="0 0 6 6" fill="none" stroke="#333" strokeWidth=".8"><path d="M1 2h3v3H1zM2 2V1h3v3H4" /></svg></button>
            <button aria-label="Close"><svg width="6" height="6" viewBox="0 0 6 6"><path d="M1 1l4 4M5 1L1 5" stroke="#333" strokeWidth=".8" /></svg></button>
          </div>
        </div>
        <div className="flex h-[9px] items-center pl-1 pr-px">
          <nav className="flex flex-1 gap-[6px]">
            {MENUS.map((m) => {
              const k = ACCESS_KEY[m] ?? 0;
              return <button key={m} className="leading-[9px]">{m.slice(0, k)}<u>{m[k]}</u>{m.slice(k + 1)}</button>;
            })}
          </nav>
          <span className={`${SANS} text-[7px] font-bold leading-[9px]`}>c<span className="text-[#8c2230]">ā</span>dence</span>
        </div>
      </header>
      <Toolbar />

      <div className="flex min-h-0 flex-1">
        <div className="flex min-w-0 flex-1 flex-col">
          <div className="flex min-h-0 flex-1">
            <aside className="flex w-[101px] shrink-0 flex-col">
              <FindPanel />
              <WorkflowPanel />
            </aside>
            <main className="flex min-w-0 flex-1 flex-col">
              <div className={`flex h-[14px] shrink-0 items-end border-b border-[#9a9a9a] ${MONO} text-[5px] leading-[9px]`}>
                <button className="pl-1 pr-[6px]">Start Page</button>
                <button className="bg-white px-[3px]">AUTOSAVE</button>
              </div>
              <div className="min-h-0 flex-1"><Board /></div>
            </main>
          </div>
          <div className="flex shrink-0 pb-[2px] pt-1">
            <CommandPanel />
            <ViewPanel />
          </div>
        </div>
        <aside className="flex w-[151px] shrink-0 flex-col border-l border-[#d0d0d0]">
          <VisibilityPanel />
          <OptionsPanel />
        </aside>
      </div>
      <StatusBar />

      <div className="pointer-events-none absolute bottom-[6px] right-[14px] whitespace-nowrap font-['Noto_Sans_CJK_SC',sans-serif] text-[18px] font-light leading-[24px] text-[#7c7c7c] [text-shadow:0_0_1px_#fff]">
        CSDN @刘小同学
      </div>
    </div>
  );
}
